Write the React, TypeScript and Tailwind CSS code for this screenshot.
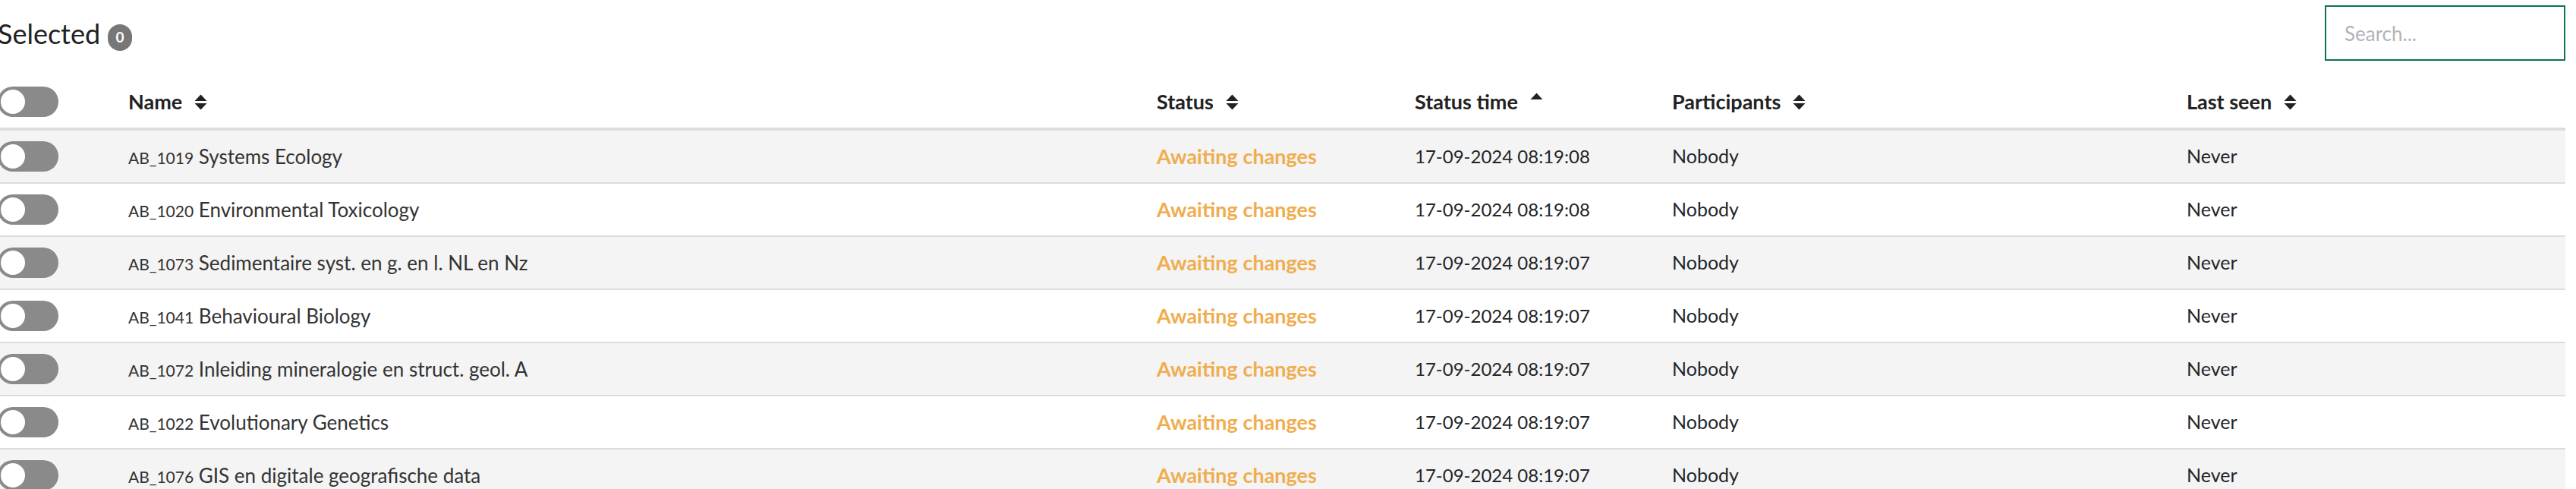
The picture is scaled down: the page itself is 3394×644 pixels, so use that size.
import React from "react";

const rows = [
  { code: "AB_1019", name: "Systems Ecology", time: "17-09-2024 08:19:08" },
  { code: "AB_1020", name: "Environmental Toxicology", time: "17-09-2024 08:19:08" },
  { code: "AB_1073", name: "Sedimentaire syst. en g. en l. NL en Nz", time: "17-09-2024 08:19:07" },
  { code: "AB_1041", name: "Behavioural Biology", time: "17-09-2024 08:19:07" },
  { code: "AB_1072", name: "Inleiding mineralogie en struct. geol. A", time: "17-09-2024 08:19:07" },
  { code: "AB_1022", name: "Evolutionary Genetics", time: "17-09-2024 08:19:07" },
  { code: "AB_1076", name: "GIS en digitale geografische data", time: "17-09-2024 08:19:07" },
];

function Toggle() {
  return (
    <div className="relative w-[80px] h-[40px] rounded-full bg-[#8a8a8a]">
      <div className="absolute left-[4px] top-[4px] w-[32px] h-[32px] rounded-full bg-white" />
    </div>
  );
}

function SortBoth() {
  return (
    <svg width="17" height="21" viewBox="0 0 17 21" className="shrink-0">
      <path d="M0.5 9 L8.5 0.5 L16.5 9 Z" fill="#222" />
      <path d="M0.5 12 L16.5 12 L8.5 20.5 Z" fill="#222" />
    </svg>
  );
}

function SortUp() {
  return (
    <svg width="17" height="21" viewBox="0 0 17 21" className="shrink-0 -mt-[3px]">
      <path d="M0.5 9 L8.5 0.5 L16.5 9 Z" fill="#222" />
    </svg>
  );
}

function Head({ label, up }: { label: string; up?: boolean }) {
  return (
    <div className="flex items-center gap-[16px] font-bold text-[27px] text-[#222]">
      <span>{label}</span>
      {up ? <SortUp /> : <SortBoth />}
    </div>
  );
}

const grid = "grid grid-cols-[172px_1355px_340px_339px_678px_1fr] items-center";

export default function App() {
  return (
    <div
      className="bg-white ml-[-3px] w-[3383px] text-[25px] text-[#212529]"
      style={{ fontFamily: "Lato, 'Noto Sans', sans-serif" }}
    >
      <div className="flex justify-between items-start h-[100px]">
        <div className="flex items-start mt-[26px]">
          <span className="text-[36px] leading-[36px] text-[#222]">Selected</span>
          <span className="ml-[10px] mt-[6px] w-[32px] h-[35px] rounded-[16px] bg-[#777] text-white text-[19px] font-bold flex items-center justify-center">
            0
          </span>
        </div>
        <input
          className="mt-[7px] w-[317px] h-[73px] border-2 border-[#0b7649] pl-[24px] text-[26px] outline-none placeholder:text-[#b3b3bb]"
          placeholder="Search..."
        />
      </div>
      <div className={`${grid} h-[72px] border-b-4 border-[#dcdcdc]`}>
        <Toggle />
        <Head label="Name" />
        <Head label="Status" />
        <Head label="Status time" up />
        <Head label="Participants" />
        <Head label="Last seen" />
      </div>
      {rows.map((r, i) => (
        <div
          key={r.code}
          className={`${grid} h-[70px] border-b-2 border-[#dddddd] ${i % 2 === 0 ? "bg-[#f4f4f4]" : "bg-white"}`}
        >
          <Toggle />
          <div className="text-[#333] text-[26px]">
            <span className="text-[21px]">{r.code}</span> {r.name}
          </div>
          <div className="font-bold text-[27px] text-[#f0ad4e]">Awaiting changes</div>
          <div className="text-[24px]">{r.time}</div>
          <div>Nobody</div>
          <div>Never</div>
        </div>
      ))}
    </div>
  );
}
